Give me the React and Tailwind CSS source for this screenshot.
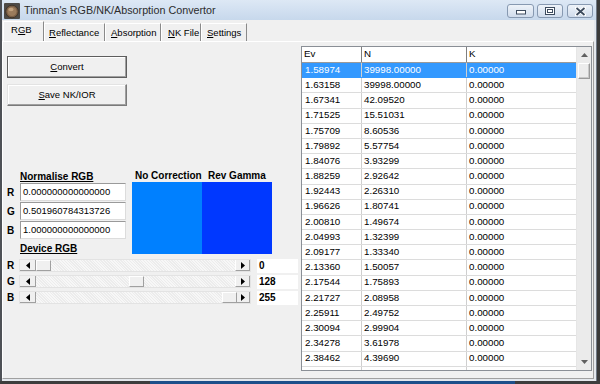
import React from "react";

const DATA = [
  ["1.58974", "39998.00000"],
  ["1.63158", "39998.00000"],
  ["1.67341", "42.09520"],
  ["1.71525", "15.51031"],
  ["1.75709", "8.60536"],
  ["1.79892", "5.57754"],
  ["1.84076", "3.93299"],
  ["1.88259", "2.92642"],
  ["1.92443", "2.26310"],
  ["1.96626", "1.80741"],
  ["2.00810", "1.49674"],
  ["2.04993", "1.32399"],
  ["2.09177", "1.33340"],
  ["2.13360", "1.50057"],
  ["2.17544", "1.75893"],
  ["2.21727", "2.08958"],
  ["2.25911", "2.49752"],
  ["2.30094", "2.99904"],
  ["2.34278", "3.61978"],
  ["2.38462", "4.39690"],
];

function TriLeft() {
  return (
    <svg width="4" height="7" viewBox="0 0 4 7">
      <path d="M4 0 L0 3.5 L4 7 Z" fill="#000" />
    </svg>
  );
}
function TriRight() {
  return (
    <svg width="4" height="7" viewBox="0 0 4 7">
      <path d="M0 0 L4 3.5 L0 7 Z" fill="#000" />
    </svg>
  );
}
function TriUp() {
  return (
    <svg width="7" height="4" viewBox="0 0 7 4">
      <path d="M0 4 L3.5 0 L7 4 Z" fill="#606060" />
    </svg>
  );
}
function TriDown() {
  return (
    <svg width="7" height="4" viewBox="0 0 7 4">
      <path d="M0 0 L3.5 4 L7 0 Z" fill="#606060" />
    </svg>
  );
}

function HScroll({ value }) {
  const left = Math.round((value / 255) * 186);
  return (
    <div className="flex h-[13px] w-[232px] border border-[#e3e3e3] bg-[#f3f3f3]">
      <div className="flex w-[16px] items-center justify-center border-r border-b border-r-[#a0a0a0] border-b-[#a0a0a0] bg-[#f0f0f0]">
        <TriLeft />
      </div>
      <div className="relative flex-1 bg-[repeating-linear-gradient(45deg,#f7f7f7_0px,#f7f7f7_1px,#ececec_1px,#ececec_2px)]">
        <div
          className="absolute top-0 h-full w-[15px] border-t border-l border-r border-b border-t-white border-l-white border-r-[#a0a0a0] border-b-[#a0a0a0] bg-[#f0f0f0]"
          style={{ left }}
        />
      </div>
      <div className="flex w-[15px] items-center justify-center border-l border-b border-l-white border-b-[#a0a0a0] bg-[#f0f0f0] border-r border-r-[#a0a0a0]">
        <TriRight />
      </div>
    </div>
  );
}

function Tab({ children, selected, w, pl }) {
  return (
    <div
      className={
        "flex items-center border-t border-l border-r border-t-white border-l-white border-r-[#8a8a8a] text-[9.5px] leading-none " +
        (selected ? "h-[20px] bg-[#f0f0f0] pb-[3px]" : "h-[18px] bg-[#f0f0f0]")
      }
      style={{ width: w, paddingLeft: pl }}
    >
      {children}
    </div>
  );
}

function Input({ value }) {
  return (
    <div className="flex h-[18px] w-[106px] items-center border border-t-[#9a9a9a] border-l-[#9a9a9a] border-r-[#dcdcdc] border-b-[#dcdcdc] bg-white pl-[2px] text-[9.5px]">
      {value}
    </div>
  );
}

export default function App() {
  return (
    <div className="flex h-[384px] w-[600px] flex-col overflow-hidden bg-[#3a3a3a] font-['Liberation_Sans',Arial,sans-serif] text-black">
      <div className="flex h-[381px] w-[597px] flex-col border-l-2 border-r border-l-[#4e5156] border-r-[#6f7986] bg-[#e4e8ed]">
        {/* Title bar */}
        <div className="flex h-[20px] items-start bg-linear-to-b from-[#dde8f5] to-[#c7d8ec]">
          <div className="mt-[3px] ml-[2px]">
            <svg width="16" height="16" viewBox="0 0 16 16">
              <rect x="0" y="0" width="16" height="16" rx="1" fill="#4d4a47" />
              <circle cx="8" cy="8.5" r="6.3" fill="#7a5f47" />
              <circle cx="8" cy="8.5" r="4.6" fill="#9b7b5c" />
              <ellipse cx="7" cy="6.5" rx="2.6" ry="1.8" fill="#c2a27f" />
              <circle cx="8" cy="8.5" r="6.3" fill="none" stroke="#3a2e24" strokeWidth="0.8" />
            </svg>
          </div>
          <div className="ml-[4px] mt-[4px] text-[10.75px] leading-[13px] text-[#2c2c2c]">
            Tinman's RGB/NK/Absorption Convertor
          </div>
          <div className="flex-1" />
          <div className="mt-[4px] mr-[3px] flex gap-[3px]">
            <div className="flex h-[14px] w-[27px] items-end justify-center rounded-[3px] border border-[#8799b1] bg-linear-to-b from-[#eef3f9] to-[#d0dcec] pb-[2px]">
              <svg width="10" height="5" viewBox="0 0 10 5">
                <rect x="0.5" y="0.5" width="9" height="3.5" fill="#fff" stroke="#3d4b5e" />
              </svg>
            </div>
            <div className="flex h-[14px] w-[26px] items-center justify-center rounded-[3px] border border-[#8799b1] bg-linear-to-b from-[#eef3f9] to-[#d0dcec]">
              <svg width="10" height="8" viewBox="0 0 10 8">
                <rect x="0.5" y="0.5" width="9" height="7" fill="#fff" stroke="#3d4b5e" />
                <rect x="2.5" y="2.5" width="5" height="3" fill="none" stroke="#3d4b5e" />
              </svg>
            </div>
            <div className="ml-[1px] flex h-[14px] w-[26px] items-center justify-center rounded-[3px] border border-[#8799b1] bg-linear-to-b from-[#eef3f9] to-[#d0dcec]">
              <svg width="11" height="9" viewBox="0 0 11 9">
                <path d="M1.5 1 L9.5 8 M9.5 1 L1.5 8" stroke="#fff" strokeWidth="3.4" strokeLinecap="square" />
                <path d="M1.5 1 L9.5 8 M9.5 1 L1.5 8" stroke="#3d4b5e" strokeWidth="1.8" />
              </svg>
            </div>
          </div>
        </div>

        {/* Body */}
        <div className="mr-[2px] mb-[2px] flex flex-1 flex-col bg-[#f0f0f0]">
          {/* Tab strip */}
          <div className="flex h-[21px] items-end pl-[1px]">
            <Tab selected w={41} pl={7}>
              R<span className="underline">G</span>B
            </Tab>
            <Tab w={61} pl={4}>
              <span className="underline">R</span>eflectance
            </Tab>
            <Tab w={56} pl={5}>
              <span className="underline">A</span>bsorption
            </Tab>
            <Tab w={40} pl={6}>
              <span className="underline">N</span>K File
            </Tab>
            <Tab w={46} pl={5}>
              <span className="underline">S</span>ettings
            </Tab>
          </div>

          {/* Panel */}
          <div className="flex flex-1 border border-t-white border-l-white border-r-[#a0a0a0] border-b-[#a0a0a0]">
            {/* Left side */}
            <div className="flex w-[298px] flex-col pt-[14px] pl-[4px]">
              <button className="flex h-[22px] w-[120px] items-center justify-center border border-[#5e5e5e] bg-[#f0f0f0] text-[9.5px] shadow-[inset_-1px_-1px_0_#a0a0a0,inset_1px_1px_0_#ffffff]">
                <span>
                  <span className="underline">C</span>onvert
                </span>
              </button>
              <button className="mt-[6px] flex h-[22px] w-[120px] items-center justify-center border border-t-[#e3e3e3] border-l-[#e3e3e3] border-r-[#7a7a7a] border-b-[#7a7a7a] bg-[#f0f0f0] text-[9.5px] shadow-[inset_-1px_-1px_0_#a0a0a0,inset_1px_1px_0_#ffffff]">
                <span>
                  <span className="underline">S</span>ave NK/IOR
                </span>
              </button>

              <div className="mt-[64px] flex">
                <div className="flex w-[125px] flex-col">
                  <div className="h-[13px] pl-[13px] text-[10px] leading-[13px] font-bold underline">
                    Normalise RGB
                  </div>
                  <div className="flex flex-col gap-[1px]">
                    {[
                      ["R", "0.000000000000000"],
                      ["G", "0.501960784313726"],
                      ["B", "1.000000000000000"],
                    ].map(([l, v]) => (
                      <div key={l} className="flex items-center">
                        <div className="w-[13px] text-[10px] font-bold">{l}</div>
                        <Input value={v} />
                      </div>
                    ))}
                  </div>
                  <div className="mt-[4px] h-[12px] pl-[13px] text-[10px] leading-[12px] font-bold underline">
                    Device RGB
                  </div>
                </div>
                <div className="flex flex-col">
                  <div className="flex h-[12px] text-[10px] leading-[12px] font-bold">
                    <div className="w-[70px] pl-[3px]">No Correction</div>
                    <div className="w-[70px] pl-[6px]">Rev Gamma</div>
                  </div>
                  <div className="flex h-[72px]">
                    <div className="w-[70px] bg-[#0080ff]" />
                    <div className="w-[70px] bg-[#0038ff]" />
                  </div>
                </div>
              </div>

              <div className="mt-[4px] flex flex-col gap-[3px]">
                {[
                  ["R", 0],
                  ["G", 128],
                  ["B", 255],
                ].map(([l, v]) => (
                  <div key={l} className="flex h-[13px] items-center">
                    <div className="w-[12px] text-[10px] font-bold">{l}</div>
                    <HScroll value={v} />
                    <div className="ml-[6px] flex h-[14px] w-[41px] items-center bg-white pl-[2px] text-[10px] font-bold">
                      {v}
                    </div>
                  </div>
                ))}
              </div>
            </div>

            {/* Table */}
            <div className="mt-[4px] mb-[7px] flex w-[291px] border border-[#8a8f96] bg-white text-[9.75px]">
              <div className="flex w-[274px] flex-col overflow-hidden">
                <div className="flex h-[16px] shrink-0 items-center border-b border-[#9a9a9a] bg-white">
                  <div className="flex h-full w-[60px] items-center border-r border-[#7f7f7f] pl-[2px]">Ev</div>
                  <div className="flex h-full w-[105px] items-center border-r border-[#7f7f7f] pl-[2px]">N</div>
                  <div className="flex h-full flex-1 items-center pl-[2px]">K</div>
                </div>
                {DATA.map(([ev, n], i) => (
                  <div
                    key={ev}
                    className={
                      "flex h-[15.2px] shrink-0 items-center border-b " +
                      (i === 0 ? "border-[#3399ff] bg-[#3399ff] text-white" : "border-[#dcdcdc]")
                    }
                  >
                    <div className="flex h-full w-[60px] items-center border-r border-[#cfcfcf] pl-[3px]">{ev}</div>
                    <div className="flex h-full w-[105px] items-center border-r border-[#cfcfcf] pl-[2px]">{n}</div>
                    <div className="flex h-full flex-1 items-center pl-[2px]">0.00000</div>
                  </div>
                ))}
                <div className="flex flex-1">
                  <div className="w-[60px] border-r border-[#cfcfcf]" />
                  <div className="w-[105px] border-r border-[#cfcfcf]" />
                </div>
              </div>
              <div className="flex w-[15px] flex-col border-l border-[#e6e6e6] bg-[#ebebeb]">
                <div className="flex h-[16px] items-center justify-center">
                  <TriUp />
                </div>
                <div className="mx-[1px] h-[16px] border border-t-white border-l-white border-r-[#9a9a9a] border-b-[#9a9a9a] bg-[#ececec] shadow-[inset_-1px_-1px_0_#c8c8c8]" />
                <div className="flex-1" />
                <div className="flex h-[16px] items-center justify-center">
                  <TriDown />
                </div>
              </div>
            </div>
          </div>
        </div>
      </div>
      <div className="flex flex-1">
        <div className="w-[150px] bg-[#3d3d3d]" />
        <div className="w-[365px] bg-[#1d4f8a]" />
        <div className="flex-1 bg-[#3d3d3d]" />
      </div>
    </div>
  );
}
